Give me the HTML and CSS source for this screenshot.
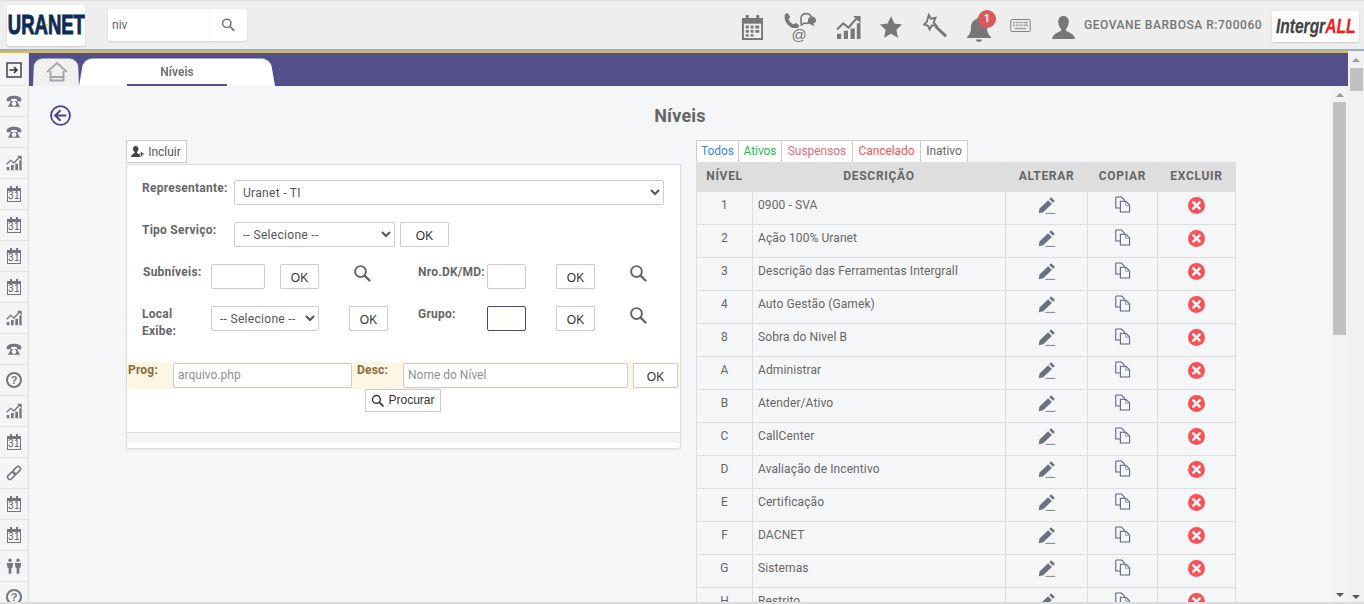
FILE: index.html
```html
<!DOCTYPE html>
<html lang="pt-BR">
<head>
    <meta charset="UTF-8">
    <title>Níveis</title>
    <link rel="stylesheet" href="styles.css">
</head>
<body>
    <svg class="defs">
        <symbol id="i-search" viewBox="0 0 24 24"><circle cx="10" cy="10" r="7.2" fill="none" stroke="currentColor" stroke-width="2.6"/><path d="M15.5 15.5L22 22" stroke="currentColor" stroke-width="3.2" stroke-linecap="round"/></symbol>
        <symbol id="i-phone" viewBox="0 0 24 24"><path d="M1 10C1 2 23 2 23 10v2.500h-6.500V9.500c-2.500-1-6.500-1-9 0v3H1z"/><path fill-rule="evenodd" d="M7.500 12h9l4.500 8.500H3zM12 12.500a3.500 3.500 0 1 0 .01 0z"/></symbol>
        <symbol id="i-chart" viewBox="0 0 24 24"><path d="M1 18h4v5H1zM7.500 15h4v8h-4zM14 13h4v10h-4zM20 8h3.500v15H20z"/><path d="M1 14l6-6 5 4 8-9" fill="none" stroke="currentColor" stroke-width="2"/><path d="M16.500 1H23.500V8z"/></symbol>
        <symbol id="i-link" viewBox="0 0 24 24"><g fill="none" stroke="currentColor" stroke-width="2.400"><rect x="1.500" y="12.500" width="13" height="7" rx="3.500" transform="rotate(-45 8 16)"/><rect x="9.500" y="4.500" width="13" height="7" rx="3.500" transform="rotate(-45 16 8)"/></g></symbol>
        <symbol id="i-people" viewBox="0 0 24 24"><circle cx="6" cy="3.500" r="2.600"/><circle cx="18" cy="3.500" r="2.600"/><path d="M1 7.500h10L9.500 15H8v8.500H4V15H2.500zM13 7.500h10L21.500 15H20v8.500h-4V15h-1.500z"/></symbol>
        <symbol id="i-pencil" viewBox="0 0 24 24"><path d="M17.500 1.500l5 5-2.500 2.500-5-5zM13.500 5.500l5 5L7 21.500l-6 1.500 1-6.500z"/><path d="M10 22.500h13v1.200H10z"/></symbol>
        <symbol id="i-copy" viewBox="0 0 24 24"><path d="M2.500 1.500h8l4 4v3M2.500 1.500v15.500h6" fill="none" stroke="#5f5f80" stroke-width="1.500"/><path d="M9 7.500h8l5 5v10H9z" fill="none" stroke="#5f5f80" stroke-width="1.500"/><path d="M16.500 7.500v5.500h5.500" fill="none" stroke="#6a8ab0" stroke-width="1.200"/></symbol>
        <symbol id="i-del" viewBox="0 0 24 24"><circle cx="12" cy="12" r="12" fill="#fb5058"/><path d="M7.500 7.500l9 9M16.500 7.500l-9 9" stroke="#fff" stroke-width="3.600" stroke-linecap="round"/></symbol>
    </svg>

    <header class="topbar">
        <div class="logo-box"><span class="logo-uranet">URANET</span></div>
        <div class="search-box">
            <span class="search-text">niv</span>
            <span class="search-btn"><svg class="ico-15"><use href="#i-search"/></svg></span>
        </div>
        <nav class="top-icons">
            <svg class="t-cal" viewBox="0 0 24 26"><path d="M1 3h22v23H1zM5 0h3v4H5zM16 0h3v4h-3z"/><path fill="#eee" d="M3 9h18v15H3z"/><path d="M5 11h3v3H5zM10 11h3v3h-3zM15 11h4v3h-4zM5 15.500h3v3H5zM10 15.500h3v3h-3zM15 15.500h4v3h-4zM5 20h3v2.500H5zM10 20h3v2.500h-3z"/></svg>
            <div class="t-phone">
                <svg viewBox="0 0 36 18"><path d="M1 3c1-2 3-2 4-1l2 4-2 2c1 3 3 5 6 6l2-2 4 3c0 2-2 4-4 4C6 18-1 10 1 3z"/><path fill="none" stroke="currentColor" stroke-width="1.800" d="M19 7a6 5.500 0 1 1 4 5.500l-3.500 2z"/><path d="M27 9.500a4.500 4 0 1 1 6 3.500l1.500 3-4.500-2a4.500 4 0 0 1-3-4.500z"/></svg>
                <span class="at">@</span>
            </div>
            <svg class="t-chart"><use href="#i-chart"/></svg>
            <svg class="t-star" viewBox="0 0 24 24"><path d="M12 1l3.400 7.400 7.600 1-5.600 5.300 1.500 8L12 18.700l-6.900 4 1.500-8L1 9.400l7.600-1z"/></svg>
            <svg class="t-wand" viewBox="0 0 26 26"><path d="M14 13l11 10-2 2.500L12 15z"/><path fill="none" stroke="currentColor" stroke-width="2" d="M6 2l2 4 5-1-2 5 3 3-5 0-2 4-2-4-4-1 3-3z"/></svg>
            <div class="bell">
                <svg class="t-bell" viewBox="0 0 24 26"><path d="M12 1c1.500 0 2 1 2 2 4 1 6 4 6 8 0 5 1 7 4 10v1H0v-1c3-3 4-5 4-10 0-4 2-7 6-8 0-1 .5-2 2-2zM9 23.500h6c0 1.500-1.300 2.500-3 2.500s-3-1-3-2.500z"/></svg>
                <span class="badge">1</span>
            </div>
            <svg class="t-keys" viewBox="0 0 22 14"><rect x=".5" y=".5" width="21" height="13" rx="1.500" fill="none" stroke="currentColor"/><path d="M3 3h2v1.500H3zM6 3h2v1.500H6zM9 3h2v1.500H9zM12 3h2v1.500h-2zM15 3h4v1.500h-4zM3 6h2v1.500H3zM6 6h2v1.500H6zM9 6h2v1.500H9zM12 6h2v1.500h-2zM15 6h4v1.500h-4zM5 9.500h12V11H5z" opacity=".7"/></svg>
            <svg class="t-user" viewBox="0 0 24 24"><path d="M12 0c3.500 0 5.500 2.500 5.500 6s-1.500 6-3 7.500v2c2 1.500 8.500 2.500 9.500 8.500H0c1-6 7.500-7 9.500-8.500v-2c-1.500-1.500-3-4-3-7.500S8.500 0 12 0z"/></svg>
        </nav>
        <span class="user-name">GEOVANE BARBOSA R:700060</span>
        <div class="logo-box logo-right"><span class="logo-integrall">Intergr<b>ALL</b></span></div>
    </header>
    <div class="line-blue"></div>

    <div class="workspace">
        <div class="app">
            <div class="line-yellow"></div>
            <div class="app-body">
                <aside class="sidebar">
                    <div class="side-item"><svg class="side-enter" viewBox="0 0 16 16"><rect x="1" y="1" width="14" height="14" fill="none" stroke="#4f4a66" stroke-width="1.600"/><path d="M3.500 8h7M8 5l3 3-3 3" fill="none" stroke="#333" stroke-width="1.500"/></svg></div>
                    <div class="side-item"><svg><use href="#i-phone"/></svg></div>
                    <div class="side-item"><svg><use href="#i-phone"/></svg></div>
                    <div class="side-item"><svg><use href="#i-chart"/></svg></div>
                    <div class="side-item"><span class="side-cal">31</span></div>
                    <div class="side-item"><span class="side-cal">31</span></div>
                    <div class="side-item"><span class="side-cal">31</span></div>
                    <div class="side-item"><span class="side-cal">31</span></div>
                    <div class="side-item"><svg><use href="#i-chart"/></svg></div>
                    <div class="side-item"><svg><use href="#i-phone"/></svg></div>
                    <div class="side-item"><span class="side-help">?</span></div>
                    <div class="side-item"><svg><use href="#i-chart"/></svg></div>
                    <div class="side-item"><span class="side-cal">31</span></div>
                    <div class="side-item"><svg><use href="#i-link"/></svg></div>
                    <div class="side-item"><span class="side-cal">31</span></div>
                    <div class="side-item"><span class="side-cal">31</span></div>
                    <div class="side-item"><svg><use href="#i-people"/></svg></div>
                    <div class="side-item"><span class="side-help">?</span></div>
                </aside>

                <div class="pane">
                    <div class="tabbar">
                        <div class="tab tab-home">
                            <svg viewBox="0 0 22 20"><path d="M1 10L11 1l10 9" fill="none" stroke="#a5a5a5" stroke-width="1.800"/><path d="M4.500 9v9.500h13V9M4.500 15h13" fill="none" stroke="#a5a5a5" stroke-width="2"/></svg>
                        </div>
                        <div class="tab tab-active"><span class="tab-label">Níveis</span></div>
                    </div>

                    <div class="pane-body">
                        <main class="content">
                            <div class="title-row">
                                <svg class="back" viewBox="0 0 20 20"><circle cx="10" cy="10" r="9" fill="none" stroke="#4a4788" stroke-width="1.700"/><path d="M15.500 10h-10M10 5l-5 5 5 5" fill="none" stroke="#4a4788" stroke-width="1.900"/></svg>
                                <h1>Níveis</h1>
                            </div>

                            <div class="columns">
                                <section class="col-left">
                                    <button class="btn-tab"><svg viewBox="0 0 18 14"><path d="M6 0c2.200 0 3.500 1.500 3.500 3.500S8.500 7 7.700 8v1c1.500.8 4.300 1.500 4.800 5H0c.5-3.500 3.300-4.200 4.800-5V8C3.500 7 2.500 5.500 2.500 3.500S3.800 0 6 0zM13 7.500h1.500v2H17V11h-2.500v2H13v-2h-2V9.500h2z"/></svg>Incluir</button>
                                    <div class="panel">
                                        <div class="fields">
                                            <div class="row">
                                                <label class="lbl lbl-rep">Representante:</label>
                                                <select class="sel sel-rep"><option>Uranet - TI</option></select>
                                            </div>
                                            <div class="row">
                                                <label class="lbl lbl-rep">Tipo Serviço:</label>
                                                <select class="sel sel-tipo"><option>-- Selecione --</option></select>
                                                <button class="btn-ok btn-wide">OK</button>
                                            </div>
                                            <div class="row">
                                                <div class="half">
                                                    <label class="lbl lbl-short lbl-sub">Subníveis:</label>
                                                    <input class="inp inp-sub">
                                                    <button class="btn-ok btn-sub">OK</button>
                                                    <svg class="lupa lupa-sub"><use href="#i-search"/></svg>
                                                </div>
                                                <label class="lbl lbl-short">Nro.DK/MD:</label>
                                                <input class="inp inp-small">
                                                <button class="btn-ok btn-far">OK</button>
                                                <svg class="lupa"><use href="#i-search"/></svg>
                                            </div>
                                            <div class="row">
                                                <div class="half">
                                                    <label class="lbl lbl-short">Local<br>Exibe:</label>
                                                    <select class="sel sel-local"><option>-- Selecione --</option></select>
                                                    <button class="btn-ok btn-local">OK</button>
                                                </div>
                                                <label class="lbl lbl-short">Grupo:</label>
                                                <input class="inp inp-small inp-focus">
                                                <button class="btn-ok btn-far">OK</button>
                                                <svg class="lupa"><use href="#i-search"/></svg>
                                            </div>
                                        </div>
                                        <div class="prog-bar">
                                            <label class="lbl-prog lbl-p1">Prog:</label>
                                            <input class="inp inp-prog" placeholder="arquivo.php">
                                            <label class="lbl-prog lbl-p2">Desc:</label>
                                            <input class="inp inp-desc" placeholder="Nome do Nível">
                                            <button class="btn-ok btn-prog">OK</button>
                                        </div>
                                        <div class="find-row">
                                            <button class="btn-find"><svg><use href="#i-search"/></svg>Procurar</button>
                                        </div>
                                        <div class="panel-foot"></div>
                                    </div>
                                </section>

                                <section class="col-right">
                                    <div class="filters">
                                        <span class="f-blue">Todos</span><span class="f-green">Ativos</span><span class="f-rose">Suspensos</span><span class="f-red">Cancelado</span><span class="f-grey">Inativo</span>
                                    </div>
                                    <table class="grid">
                                        <thead>
                                            <tr><th class="c-niv">NÍVEL</th><th class="c-desc">DESCRIÇÃO</th><th class="c-alt">ALTERAR</th><th class="c-cop">COPIAR</th><th class="c-exc">EXCLUIR</th></tr>
                                        </thead>
                                        <tbody>
                                            <tr><td class="n">1</td><td>0900 - SVA</td><td class="a"><svg class="pen"><use href="#i-pencil"/></svg></td><td class="a"><svg class="cop"><use href="#i-copy"/></svg></td><td class="a"><svg class="del"><use href="#i-del"/></svg></td></tr>
                                            <tr><td class="n">2</td><td>Ação 100% Uranet</td><td class="a"><svg class="pen"><use href="#i-pencil"/></svg></td><td class="a"><svg class="cop"><use href="#i-copy"/></svg></td><td class="a"><svg class="del"><use href="#i-del"/></svg></td></tr>
                                            <tr><td class="n">3</td><td>Descrição das Ferramentas Intergrall</td><td class="a"><svg class="pen"><use href="#i-pencil"/></svg></td><td class="a"><svg class="cop"><use href="#i-copy"/></svg></td><td class="a"><svg class="del"><use href="#i-del"/></svg></td></tr>
                                            <tr><td class="n">4</td><td>Auto Gestão (Gamek)</td><td class="a"><svg class="pen"><use href="#i-pencil"/></svg></td><td class="a"><svg class="cop"><use href="#i-copy"/></svg></td><td class="a"><svg class="del"><use href="#i-del"/></svg></td></tr>
                                            <tr><td class="n">8</td><td>Sobra do Nivel B</td><td class="a"><svg class="pen"><use href="#i-pencil"/></svg></td><td class="a"><svg class="cop"><use href="#i-copy"/></svg></td><td class="a"><svg class="del"><use href="#i-del"/></svg></td></tr>
                                            <tr><td class="n">A</td><td>Administrar</td><td class="a"><svg class="pen"><use href="#i-pencil"/></svg></td><td class="a"><svg class="cop"><use href="#i-copy"/></svg></td><td class="a"><svg class="del"><use href="#i-del"/></svg></td></tr>
                                            <tr><td class="n">B</td><td>Atender/Ativo</td><td class="a"><svg class="pen"><use href="#i-pencil"/></svg></td><td class="a"><svg class="cop"><use href="#i-copy"/></svg></td><td class="a"><svg class="del"><use href="#i-del"/></svg></td></tr>
                                            <tr><td class="n">C</td><td>CallCenter</td><td class="a"><svg class="pen"><use href="#i-pencil"/></svg></td><td class="a"><svg class="cop"><use href="#i-copy"/></svg></td><td class="a"><svg class="del"><use href="#i-del"/></svg></td></tr>
                                            <tr><td class="n">D</td><td>Avaliação de Incentivo</td><td class="a"><svg class="pen"><use href="#i-pencil"/></svg></td><td class="a"><svg class="cop"><use href="#i-copy"/></svg></td><td class="a"><svg class="del"><use href="#i-del"/></svg></td></tr>
                                            <tr><td class="n">E</td><td>Certificação</td><td class="a"><svg class="pen"><use href="#i-pencil"/></svg></td><td class="a"><svg class="cop"><use href="#i-copy"/></svg></td><td class="a"><svg class="del"><use href="#i-del"/></svg></td></tr>
                                            <tr><td class="n">F</td><td>DACNET</td><td class="a"><svg class="pen"><use href="#i-pencil"/></svg></td><td class="a"><svg class="cop"><use href="#i-copy"/></svg></td><td class="a"><svg class="del"><use href="#i-del"/></svg></td></tr>
                                            <tr><td class="n">G</td><td>Sistemas</td><td class="a"><svg class="pen"><use href="#i-pencil"/></svg></td><td class="a"><svg class="cop"><use href="#i-copy"/></svg></td><td class="a"><svg class="del"><use href="#i-del"/></svg></td></tr>
                                            <tr><td class="n">H</td><td>Restrito</td><td class="a"><svg class="pen"><use href="#i-pencil"/></svg></td><td class="a"><svg class="cop"><use href="#i-copy"/></svg></td><td class="a"><svg class="del"><use href="#i-del"/></svg></td></tr>
                                        </tbody>
                                    </table>
                                </section>
                            </div>
                        </main>
                        <div class="sbar sbar-inner"><i class="arr-up"></i><b class="thumb"></b><i class="arr-down"></i></div>
                    </div>
                </div>
            </div>
        </div>
        <div class="sbar sbar-outer"><i class="arr-up"></i><b class="thumb"></b><i class="arr-down"></i></div>
    </div>
    <div class="line-bottom"></div>
</body>
</html>
```

FILE: styles.css
```css
* { box-sizing: border-box; }

html, body { margin: 0; height: 604px; overflow: hidden; }

body {
  display: flex;
  flex-direction: column;
  font-family: Roboto, "Liberation Sans", sans-serif;
  font-size: 12px;
  color: #666;
  background: #f5f6f8;
}

svg { fill: currentColor; }

.defs { width: 0; height: 0; position: absolute; }

/* top bar */
.topbar {
  height: 49px;
  flex: none;
  display: flex;
  align-items: center;
  padding: 0 5px 0 7px;
  background: #eee;
  border-top: 1px solid #ddd;
}

.logo-box {
  width: 78px;
  height: 41px;
  flex: none;
  display: flex;
  align-items: center;
  justify-content: center;
  background: #fff;
  border-radius: 2px;
  box-shadow: 0 1px 2px rgba(0,0,0,.15);
  overflow: hidden;
}

.logo-uranet {
  position: relative;
  width: 111px;
  flex: none;
  margin-left: -4px;
  text-align: center;
  font-family: "Liberation Sans", sans-serif;
  font-weight: 700;
  font-size: 28px;
  color: #0f2c54;
  -webkit-text-stroke: 1px #0f2c54;
  transform: scaleX(.66);
  white-space: nowrap;
}

.logo-uranet::after {
  content: "";
  position: absolute;
  left: 51%;
  top: 15px;
  width: 3px;
  height: 2px;
  background: #e5bd2c;
}

.search-box {
  width: 139px;
  height: 32px;
  margin-left: 23px;
  display: flex;
  align-items: center;
  justify-content: space-between;
  background: #fff;
  border-radius: 3px;
  box-shadow: 0 1px 2px rgba(0,0,0,.12);
}

.search-text { padding-left: 4px; color: #666; }

.search-btn {
  width: 39px;
  height: 32px;
  display: flex;
  align-items: center;
  padding: 0 0 2px 12px;
  color: #777;
  border-left: 1px solid #f8f8f8;
}

.ico-15 { width: 14px; height: 15px; }

.top-icons {
  margin-left: auto;
  display: flex;
  align-items: center;
  color: #777;
}

.top-icons > * { flex: none; }

.t-cal { width: 23px; height: 25px; margin-top: 4px; }

.t-phone {
  width: 36px;
  height: 29px;
  margin-left: 18px;
  margin-top: 3px;
  display: flex;
  flex-direction: column;
  align-items: center;
}

.t-phone svg { width: 36px; height: 16px; flex: none; }

.at { font-family: "Liberation Sans", sans-serif; font-size: 15px; line-height: 14px; margin-left: -2px; }

.t-chart { width: 25px; height: 25px; margin-left: 18px; margin-top: 4px; }
.t-star { width: 24px; height: 24px; margin-left: 18px; margin-top: 3px; }
.t-wand { width: 25px; height: 25px; margin-left: 20px; margin-top: 1px; }

.bell { width: 30px; height: 30px; margin-left: 19px; display: flex; align-items: flex-end; margin-top: 4px; }
.t-bell { width: 24px; height: 26px; }

.badge {
  position: absolute;
  margin-left: 11px;
  margin-bottom: 14px;
  width: 18px;
  height: 18px;
  border-radius: 50%;
  background: #d9595c;
  color: #fff;
  font-size: 11px;
  font-weight: 700;
  text-align: center;
  line-height: 18px;
}

.t-keys { width: 21px; height: 13px; margin-left: 13px; }
.t-user { width: 23px; height: 23px; margin-left: 21px; margin-top: 5px; }

.user-name {
  margin-left: 9px;
  width: 188px;
  font-size: 12px;
  font-weight: 500;
  letter-spacing: .53px;
  color: #777;
  white-space: nowrap;
}

.logo-right { width: 87px; height: 31px; margin-top: 2px; }

.logo-integrall {
  flex: none;
  font-family: "Liberation Sans", sans-serif;
  font-size: 21px;
  font-weight: 700;
  font-style: italic;
  color: #444;
  -webkit-text-stroke: .3px currentColor;
  transform: scaleX(.74);
  white-space: nowrap;
}

.logo-integrall b { color: #ee1c25; }

.line-blue { height: 2px; flex: none; background: #9aafca; }

/* body of the app */
.workspace { flex: 1; min-height: 0; display: flex; }

.app { flex: 1; min-width: 0; display: flex; flex-direction: column; }

.line-yellow { height: 2px; flex: none; background: #e5bd2c; }

.app-body { flex: 1; min-height: 0; display: flex; }

.sidebar {
  width: 29px;
  flex: none;
  overflow: hidden;
  padding-top: 2px;
  background: #f5f5f5;
  border-right: 1px solid #e2e2e2;
}

.side-item {
  height: 31px;
  display: flex;
  align-items: center;
  justify-content: center;
  color: #75757f;
  border-bottom: 1px solid #e4e4e4;
}

.side-item svg { width: 16px; height: 16px; }

.side-cal {
  position: relative;
  width: 14px;
  height: 14px;
  margin-top: 1px;
  border: 1px solid #75757f;
  border-top-width: 3px;
  font-family: "Liberation Sans", sans-serif;
  font-size: 10px;
  line-height: 10px;
  text-align: center;
  letter-spacing: .4px;
  color: #5f5f68;
}

.side-cal::before {
  content: "";
  position: absolute;
  left: 2px;
  right: 2px;
  top: -5px;
  height: 3px;
  border-left: 2px solid #75757f;
  border-right: 2px solid #75757f;
}

.side-help {
  width: 16px;
  height: 16px;
  border: 2px solid #75757f;
  border-radius: 50%;
  font-family: "Liberation Sans", sans-serif;
  font-weight: 700;
  font-size: 11px;
  line-height: 12px;
  text-align: center;
}

.pane { flex: 1; min-width: 0; display: flex; flex-direction: column; }

.tabbar {
  height: 33px;
  flex: none;
  display: flex;
  align-items: flex-end;
  padding-left: 4px;
  background: #524f8b;
}

.tab { height: 29px; display: flex; justify-content: center; position: relative; }

.tab::before {
  content: "";
  position: absolute;
  inset: 0;
  border-radius: 9px 9px 0 0;
  transform: perspective(50px) rotateX(5deg);
  transform-origin: bottom;
}

.tab > * { position: relative; }

.tab-home { width: 46px; align-items: center; padding-left: 1px; }
.tab-home::before { background: #f0f0f0; left: 0; right: 0; }
.tab-home svg { width: 22px; height: 20px; margin-top: 1px; }

.tab-active { width: 196px; }
.tab-active::before { background: #fff; }

.tab-label {
  width: 100px;
  padding-top: 1px;
  text-align: center;
  line-height: 28px;
  font-weight: 700;
  color: #777;
  border-bottom: 2px solid #524f8b;
}

.pane-body { flex: 1; min-height: 0; display: flex; }

.content { flex: 1; min-width: 0; overflow: hidden; padding-top: 19px; }

.title-row {
  height: 20px;
  display: grid;
  grid-template-columns: 1fr auto 1fr;
  align-items: center;
}

.back { width: 21px; height: 21px; margin-left: 21px; }

h1 {
  grid-column: 2;
  margin: 0;
  font-size: 18px;
  font-weight: 700;
  letter-spacing: .2px;
  color: #666;
}

.columns { display: flex; gap: 15px; margin: 15px 0 0 97px; align-items: flex-start; }

/* left column */
.col-left { width: 555px; flex: none; }

button { font-family: "Liberation Sans", sans-serif; }

.btn-tab {
  width: 61px;
  height: 23px;
  display: flex;
  align-items: center;
  justify-content: center;
  gap: 3px;
  padding: 0 1px 0 0;
  font-family: Roboto, sans-serif;
  font-size: 12px;
  color: #555;
  background: #fff;
  border: 1px solid #ccc;
}

.btn-tab svg { width: 14px; height: 11px; fill: #444; }

.panel {
  height: 285px;
  margin-top: 1px;
  background: #fff;
  border: 1px solid #ddd;
  border-radius: 0 0 3px 3px;
  box-shadow: 0 1px 2px rgba(0,0,0,.08);
}

.fields { height: 197px; padding: 15px 0 0 15px; }

.row { display: flex; align-items: flex-start; height: 25px; margin-bottom: 17px; }

.half { width: 276px; display: flex; align-items: flex-start; flex: none; }

.lbl {
  flex: none;
  font-weight: 700;
  font-size: 12px;
  letter-spacing: .25px;
  line-height: 17px;
  color: #666;
}

.lbl-rep { width: 92px; }
.lbl-short { width: 69px; }
.lbl-sub { padding-left: 1px; }

.sel {
  height: 25px;
  padding: 0 4px;
  font-family: Roboto, sans-serif;
  font-size: 12px;
  letter-spacing: .3px;
  color: #555;
  background: #fff;
  border: 1px solid #ccc;
  border-radius: 2px;
}

.sel-rep { width: 430px; }
.sel-tipo { width: 161px; }
.sel-local { width: 108px; }

.inp {
  height: 25px;
  padding: 0 4px 1px;
  font-family: Roboto, sans-serif;
  font-size: 12px;
  color: #555;
  background: #fff;
  border: 1px solid #ccc;
  border-radius: 2px;
  outline: none;
}

.inp::placeholder { color: #8f8f8f; }

.inp-sub { width: 54px; }
.inp-small { width: 39px; }
.inp-focus { border-color: #4a4788; }

.btn-ok {
  flex: none;
  width: 39px;
  height: 25px;
  padding: 2px 0 0;
  font-size: 12px;
  color: #333;
  background: #fff;
  border: 1px solid #ccc;
  border-radius: 1px;
}

.btn-wide { width: 49px; margin-left: 5px; }
.btn-sub { margin-left: 15px; }
.btn-local { margin-left: 30px; }
.btn-far { margin-left: 30px; }

.lupa { flex: none; width: 18px; height: 18px; margin-left: 34px; color: #666; }

.prog-bar {
  height: 27px;
  display: flex;
  align-items: center;
  background: #fdf6e3;
  border-radius: 2px;
}

.lbl-prog {
  flex: none;
  align-self: flex-start;
  font-weight: 700;
  font-size: 12px;
  line-height: 16px;
  letter-spacing: .2px;
  color: #8a6d3b;
}

.lbl-p1 { width: 46px; padding-left: 1px; }
.lbl-p2 { width: 51px; padding-left: 5px; }

.inp-prog { width: 179px; }
.inp-desc { width: 225px; }
.btn-prog { width: 45px; margin-left: 5px; }

.find-row { height: 43px; display: flex; justify-content: center; align-items: flex-start; padding-right: 1px; }

.btn-find {
  width: 76px;
  height: 23px;
  display: flex;
  align-items: center;
  justify-content: center;
  gap: 4px;
  padding: 0 0 1px;
  font-size: 12px;
  color: #333;
  background: #fff;
  border: 1px solid #ccc;
}

.btn-find svg { width: 13px; height: 13px; color: #333; }

.panel-foot { height: 11px; background: #f4f4f4; border-top: 1px solid #ddd; }

/* right column */
.col-right { width: 540px; flex: none; }

.filters { display: flex; height: 22px; }

.filters span {
  line-height: 21px;
  text-align: center;
  background: #fff;
  border: 1px solid #ccc;
  border-left: 0;
  border-bottom: 0;
  letter-spacing: -.05px;
}

.filters span:first-child { border-left: 1px solid #ccc; }

.f-blue { width: 43px; color: #3d86e0; }
.f-green { width: 43px; color: #1cc04a; }
.f-rose { width: 71px; color: #e26d78; }
.f-red { width: 68px; color: #f4545c; }
.f-grey { width: 47px; color: #666; }

.grid { width: 540px; border-collapse: collapse; table-layout: fixed; }

.grid th {
  height: 29px;
  font-size: 12px;
  font-weight: 700;
  letter-spacing: .7px;
  color: #666;
  background: #dedede;
  border: 1px solid #ddd;
  padding: 0 0 2px;
}

.c-niv { width: 56px; }
.c-alt { width: 82px; }
.c-cop { width: 70px; }
.c-exc { width: 78px; }

.grid td {
  height: 33px;
  padding: 5px 5px 0;
  vertical-align: top;
  line-height: 16px;
  letter-spacing: .1px;
  color: #666;
  border: 1px solid #ddd;
}

.grid td.n { text-align: center; }

.grid td.a { text-align: center; padding: 4px 0 0; }

.grid td svg { display: inline-block; vertical-align: top; }

.pen { width: 18px; height: 18px; color: #6a7180; }
.cop { width: 17px; height: 17px; }
.del { width: 17px; height: 17px; margin-top: 1px; }

/* scrollbars */
.sbar { flex: none; display: flex; flex-direction: column; align-items: center; background: #f3f3f3; }

.sbar-inner { width: 17px; }
.sbar-outer { width: 16px; background: #f1f1f1; }

.thumb { display: block; width: 13px; background: #c1c1c1; }

.sbar-inner .thumb { height: 233px; margin-top: 5px; }
.sbar-outer .thumb { height: 23px; margin-top: 6px; }

.arr-up, .arr-down { display: block; width: 0; height: 0; border: 4px solid transparent; }

.arr-up { border-top: 0; border-bottom: 4px solid #999; margin-top: 7px; }
.arr-down { border-bottom: 0; border-top: 4px solid #555; margin-top: auto; margin-bottom: 5px; }

.sbar-outer .arr-up { margin-top: 7px; }
.sbar-outer .arr-down { margin-bottom: 3px; }

.line-bottom { height: 2px; flex: none; background: #ddd; }
```
